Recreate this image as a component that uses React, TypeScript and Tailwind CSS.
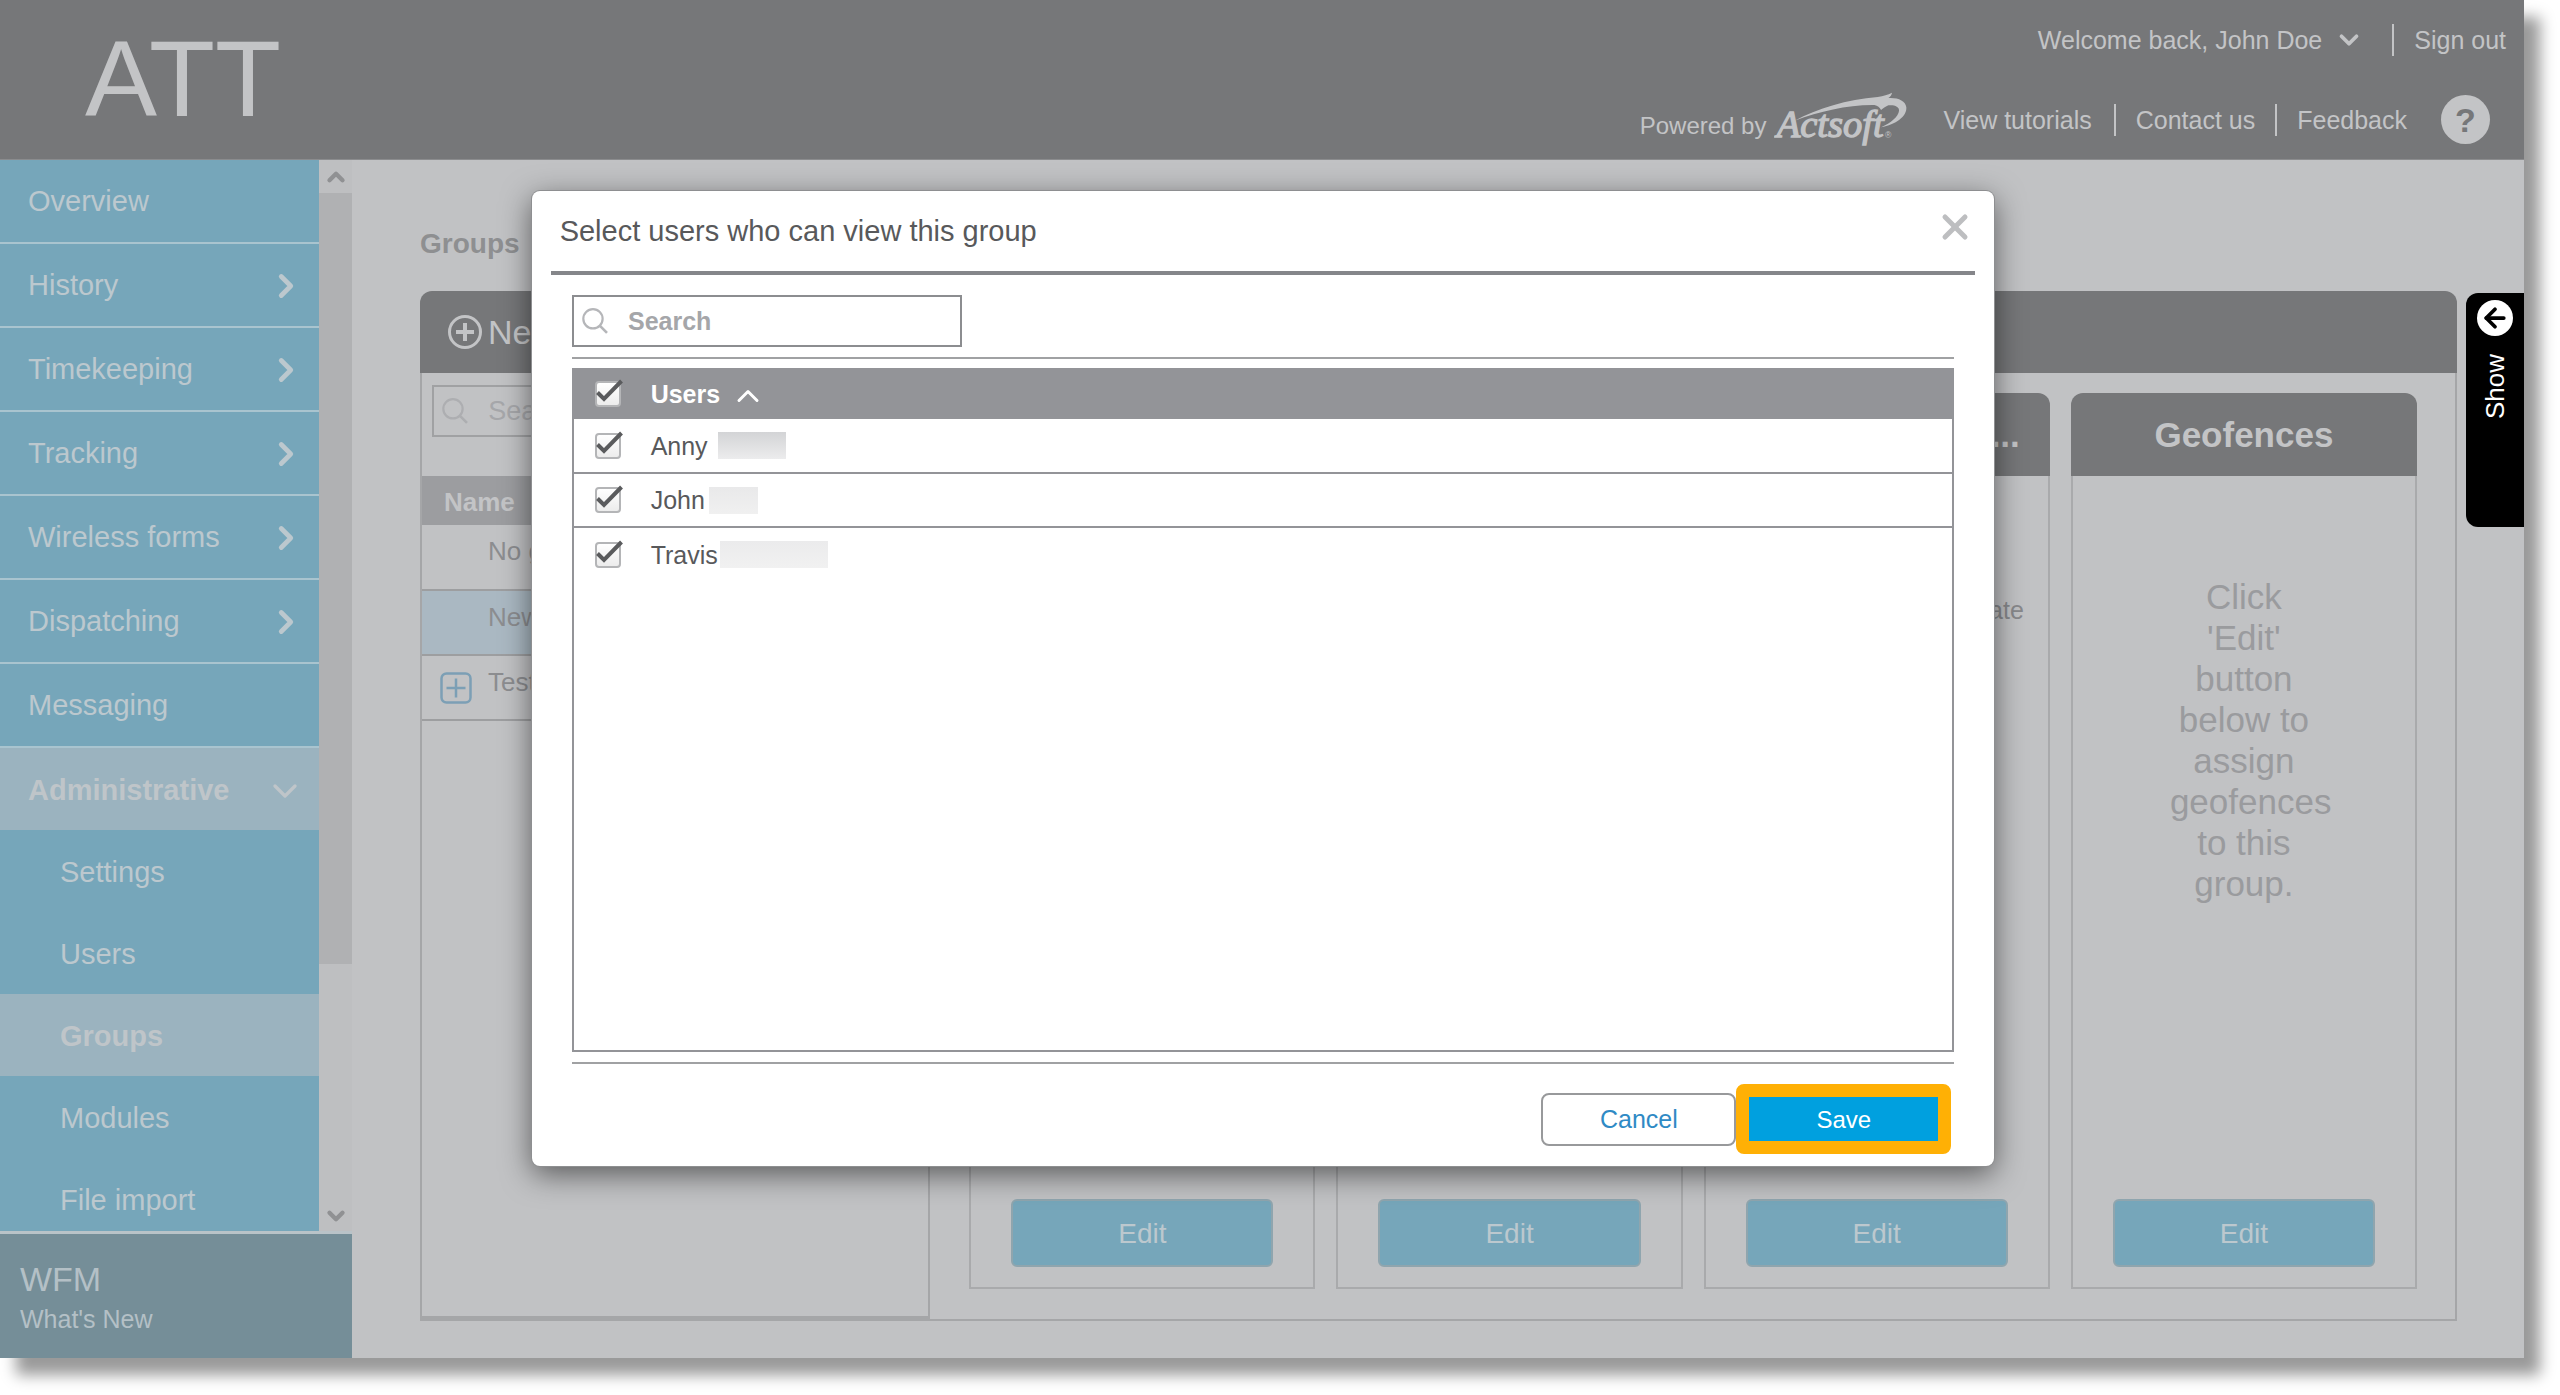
import React from 'react';
import { ArrowLeft, ChevronDown, ChevronRight, ChevronUp, X } from 'lucide-react';

const navItems = [
  { label: 'Overview', expandable: false },
  { label: 'History', expandable: true },
  { label: 'Timekeeping', expandable: true },
  { label: 'Tracking', expandable: true },
  { label: 'Wireless forms', expandable: true },
  { label: 'Dispatching', expandable: true },
  { label: 'Messaging', expandable: false },
];

const adminItems = ['Settings', 'Users', 'Groups', 'Modules', 'File import'];

const groups = [
  { name: 'No group', selected: false, expandable: false },
  { name: 'New Group', selected: true, expandable: false },
  { name: 'Test Group', selected: false, expandable: true },
];

const users = [
  { name: 'Anny', mask: 'ml-[10px] w-[68px] from-[#d3d4d6] to-[#ececed]' },
  { name: 'John', mask: 'ml-1 w-[49px] from-[#e9e9ea] to-[#f0f0f0]' },
  { name: 'Travis', mask: 'ml-[2px] w-[108px] from-[#ebebec] to-[#f1f1f1]' },
];

function SearchIcon({ className }: { className: string }) {
  return (
    <svg viewBox="0 0 30 30" className={className} fill="none" stroke="currentColor">
      <circle cx="12.5" cy="12.5" r="11" strokeWidth="2.5" />
      <path d="M20.5 20.5 28.5 28.5" strokeWidth="3" />
    </svg>
  );
}

function ActsoftLogo() {
  return (
    <svg viewBox="0 0 400 165" className="h-[55px] w-[133px]" fill="#c3c4c6" role="img" aria-label="Actsoft">
      <text
        x="8"
        y="136"
        fontSize="116"
        fontStyle="italic"
        fontFamily="Liberation Serif, serif"
        stroke="#c3c4c6"
        strokeWidth="4"
      >
        Actsoft
      </text>
      <text x="334" y="139" fontSize="26" fontFamily="Liberation Sans, sans-serif">®</text>
      <path d="M62 86C130 50 220 22 312 15C330 12 342 8 355 2C354 8 350 14 344 18C372 16 396 26 398 46C400 74 366 98 322 106C352 92 374 74 376 56C377 44 362 38 344 40C336 44 330 48 322 54C318 46 312 42 302 39C220 38 140 58 62 86Z" />
    </svg>
  );
}

function Header() {
  return (
    <header className="flex h-40 shrink-0 justify-between border-b border-[#8b8c8e] bg-[#767779] text-[#c3c4c6]">
      <div className="pt-[19px] pl-[85px] text-[108px] leading-[120px]">ATT</div>
      <div className="flex flex-col items-end pt-6 text-[25px] leading-8">
        <div className="flex h-8 items-center pr-[18px]">
          <button type="button" className="flex items-center gap-3">
            Welcome back, John Doe
            <ChevronDown size={30} strokeWidth={3} />
          </button>
          <a href="#signout" className="ml-7 border-l-2 border-[#c3c4c6] pl-5">
            Sign out
          </a>
        </div>
        <div className="mt-9 flex items-center pr-[34px]">
          <div className="flex items-center gap-2 text-2xl">
            <span className="pt-3">Powered by</span>
            <ActsoftLogo />
          </div>
          <a href="#tutorials" className="ml-9 pr-[22px]">View tutorials</a>
          <a href="#contact" className="border-l-2 border-[#c3c4c6] px-5">Contact us</a>
          <a href="#feedback" className="border-l-2 border-[#c3c4c6] pr-[34px] pl-5">Feedback</a>
          <button
            type="button"
            aria-label="Help"
            className="flex size-[49px] items-center justify-center rounded-full bg-[#c3c4c6] text-[34px] font-bold text-[#767779]"
          >
            ?
          </button>
        </div>
      </div>
    </header>
  );
}

function Sidebar() {
  return (
    <aside className="flex w-[352px] shrink-0 flex-col">
      <div className="flex min-h-0 flex-1">
        <nav className="flex-1 overflow-hidden bg-[#76a6ba] text-[#bcc8ce]">
          {navItems.map((item) => (
            <a
              key={item.label}
              href="#nav"
              className="flex h-[84px] items-center justify-between border-b-2 border-[#a9c4cf] pt-[2px] pr-[14px] pl-7 text-[29px]"
            >
              {item.label}
              {item.expandable && <ChevronRight size={38} strokeWidth={3} />}
            </a>
          ))}
          <a
            href="#nav"
            className="flex h-[82px] items-center justify-between bg-[#9bb3bf] pt-1 pr-[14px] pl-7 text-[29px] font-bold text-[#bfc5c9]"
          >
            Administrative
            <ChevronDown size={40} />
          </a>
          {adminItems.map((label) => (
            <a
              key={label}
              href="#nav"
              className={
                label === 'Groups'
                  ? 'flex h-[82px] items-center bg-[#9bb3bf] pt-1 pl-[60px] text-[29px] font-bold text-[#bfc5c9]'
                  : 'flex h-[82px] items-center pt-1 pl-[60px] text-[29px]'
              }
            >
              {label}
            </a>
          ))}
        </nav>
        <div className="flex w-[33px] flex-col items-center bg-[#bebfc1] text-[#909193]">
          <div className="flex h-[33px] items-center">
            <ChevronUp size={26} strokeWidth={4} />
          </div>
          <div className="h-[72%] w-full bg-[#b0b1b3]" />
          <ChevronDown size={26} strokeWidth={4} className="mt-auto mb-[2px]" />
        </div>
      </div>
      <div className="h-[127px] border-t-[3px] border-[#b9c3c8] bg-[#758e98] pt-[25px] pl-5 text-[#b4c0c6]">
        <div className="text-[34px] leading-10">WFM</div>
        <a href="#new" className="block text-[25px] leading-10">What&apos;s New</a>
      </div>
    </aside>
  );
}

function GroupList() {
  return (
    <div className="w-1/4 border-r-2 border-b-3 border-[#a5a6a8]">
      <div className="mx-[10px] mt-3 flex h-[52px] w-[390px] items-center border-2 border-[#a0a1a3] pl-2">
        <SearchIcon className="size-[30px] text-[#adaeb1]" />
        <input
          type="text"
          placeholder="Search"
          aria-label="Search groups"
          className="ml-5 w-full bg-transparent text-[27px] outline-none placeholder:text-[#a6a7aa]"
        />
      </div>
      <table className="mt-[39px] w-full text-left">
        <thead>
          <tr className="h-[49px] bg-[#9c9da0] text-[26px] leading-8 text-[#c3c4c6]">
            <th className="pt-[2px] pl-[22px]">Name</th>
          </tr>
        </thead>
        <tbody>
          {groups.map((group) => (
            <tr
              key={group.name}
              className={
                group.selected
                  ? 'h-[65px] border-b-2 border-[#9d9ea0] bg-[#aab8c2]'
                  : 'h-[65px] border-b-2 border-[#9d9ea0]'
              }
            >
              <td className="pl-[18px]">
                <div className="flex items-center text-[26px] leading-8 text-[#8c8d90]">
                  <span className="w-12">
                    {group.expandable && (
                      <svg viewBox="0 0 32 32" className="size-8" fill="none" stroke="#7c9fb5" strokeWidth="2.5">
                        <rect x="1.5" y="1.5" width="29" height="29" rx="5" />
                        <path d="M16 6.500V25.500M6.500 16H25.500" />
                      </svg>
                    )}
                  </span>
                  <span className="pb-3">{group.name}</span>
                </div>
              </td>
            </tr>
          ))}
        </tbody>
      </table>
    </div>
  );
}

function Card({ title, titleClass, children }: { title: string; titleClass: string; children?: React.ReactNode }) {
  return (
    <section className="flex min-w-0 flex-1 flex-col">
      <h2 className={`h-[83px] rounded-t-xl bg-[#767779] px-[30px] text-[35px] leading-[84px] font-bold text-[#c3c4c6] ${titleClass}`}>
        {title}
      </h2>
      <div className="flex flex-1 flex-col border-2 border-t-0 border-[#a9aaac] px-10 pb-5">
        {children}
        <button
          type="button"
          className="mt-auto h-[68px] rounded-md border-2 border-[#8fa5ae] bg-[#76a6ba] pt-[2px] text-[28px] text-[#bcc8ce]"
        >
          Edit
        </button>
      </div>
    </section>
  );
}

function GroupsPage() {
  return (
    <main className="flex min-w-0 flex-1 flex-col bg-[#c1c2c4] pt-16 pr-[67px] pb-[37px] pl-[68px]">
      <h1 className="text-[28px] leading-10 font-bold text-[#8e8f91]">Groups</h1>
      <div className="mt-[27px] flex h-[82px] shrink-0 items-center rounded-t-xl bg-[#767779] pl-7">
        <button type="button" className="flex items-center gap-[6px] text-[34px] text-[#c3c4c6]">
          <svg viewBox="0 0 34 34" className="size-[34px]" fill="none" stroke="currentColor">
            <circle cx="17" cy="17" r="15.500" strokeWidth="3" />
            <path d="M17 8V26M8 17H26" strokeWidth="4" />
          </svg>
          New Group
        </button>
      </div>
      <div className="flex flex-1 border-2 border-t-0 border-[#a5a6a8]">
        <GroupList />
        <div className="flex flex-1 gap-[21px] pt-5 pr-[38px] pb-[30px] pl-[39px]">
          <Card title="Users" titleClass="text-center" />
          <Card title="Managers" titleClass="text-center" />
          <Card title="Visible t..." titleClass="text-right">
            <p className="-mr-4 pt-[116px] text-right text-[25px] text-[#88898c]">Create</p>
          </Card>
          <Card title="Geofences" titleClass="text-center">
            <p className="mx-auto w-[148px] pt-[100px] text-center text-[35px] leading-[41px] text-[#9a9b9e]">
              Click &apos;Edit&apos; button below to assign geofences to this group.
            </p>
          </Card>
        </div>
      </div>
    </main>
  );
}

function Checkbox({ label }: { label: string }) {
  return (
    <span className="relative block size-[26px]">
      <input
        type="checkbox"
        defaultChecked
        aria-label={label}
        className="peer block size-[26px] appearance-none rounded-sm border-2 border-[#b4b5b7] bg-linear-to-b from-white to-[#ececec]"
      />
      <svg
        viewBox="0 0 30 30"
        className="pointer-events-none absolute -top-[2px] left-0 hidden size-[30px] peer-checked:block"
        fill="none"
        stroke="#5a5b5d"
      >
        <path d="M2.500 13.500 9 20 26.500 2" strokeWidth="4" />
      </svg>
    </span>
  );
}

function UsersDialog() {
  return (
    <div
      role="dialog"
      aria-labelledby="dialog-title"
      className="w-[58%] self-start rounded-lg bg-white text-[#58595b] shadow-[0_8px_30px_rgba(0,0,0,0.55)] ring-1 ring-[#8e8f91]"
    >
      <div className="mx-[19px] flex h-[84px] items-center justify-between border-b-4 border-[#85868a] pl-[9px]">
        <h2 id="dialog-title" className="pt-[2px] text-[29px]">Select users who can view this group</h2>
        <button type="button" aria-label="Close" className="pb-2 text-[#bdbec0]">
          <X size={40} strokeWidth={3} />
        </button>
      </div>
      <div className="px-10 pt-5">
        <div className="flex h-[52px] w-[390px] items-center border-2 border-[#8c8d90] pl-2">
          <SearchIcon className="size-[30px] text-[#b5b6b9]" />
          <input
            type="text"
            placeholder="Search"
            aria-label="Search users"
            className="ml-5 w-full bg-transparent pt-[2px] text-[25px] font-bold outline-none placeholder:text-[#a5a6a9]"
          />
        </div>
        <hr className="mt-[10px] border-t-2 border-[#a0a1a3]" />
        <div className="mt-[9px] min-h-[684px] border-2 border-t-0 border-[#939498]">
          <table className="w-full text-left text-[25px] leading-8">
            <thead>
              <tr className="h-[51px] bg-[#939498] text-white">
                <th className="w-[77px] pl-[21px]">
                  <Checkbox label="Select all users" />
                </th>
                <th>
                  <button type="button" className="flex items-center gap-[10px]">
                    Users
                    <ChevronUp size={36} className="mt-1" />
                  </button>
                </th>
              </tr>
            </thead>
            <tbody>
              {users.map((user) => (
                <tr key={user.name} className="h-[54px] border-b-2 border-[#939498] last:border-b-0">
                  <td className="pl-[21px]">
                    <Checkbox label={user.name} />
                  </td>
                  <td>
                    <span className="flex items-center">
                      {user.name}
                      <span className={`h-[27px] bg-linear-to-b ${user.mask}`} />
                    </span>
                  </td>
                </tr>
              ))}
            </tbody>
          </table>
        </div>
        <hr className="mt-[10px] border-t-2 border-[#a0a1a3]" />
      </div>
      <div className="flex items-center justify-end pt-5 pr-[43px] pb-3">
        <button type="button" className="h-[53px] w-[195px] rounded-lg border-2 border-[#98999b] pt-[2px] text-[25px] text-[#2f8ac5]">
          Cancel
        </button>
        <button type="button" className="h-[70px] w-[215px] rounded-lg border-[13px] border-[#ffb005] bg-[#00a0df] pt-[2px] text-2xl text-white">
          Save
        </button>
      </div>
    </div>
  );
}

export default function App() {
  return (
    <div className="h-screen overflow-hidden bg-white pr-9 pb-[37px] font-['Liberation_Sans',Arial,sans-serif]">
      <div className="relative flex h-full flex-col shadow-[16px_17px_14px_rgba(0,0,0,0.4)]">
        <Header />
        <div className="flex min-h-0 flex-1">
          <Sidebar />
          <GroupsPage />
        </div>

        <div className="absolute inset-0 flex justify-center pt-[191px] pl-[2px]">
          <UsersDialog />
        </div>

        <button
          type="button"
          className="absolute top-[293px] right-0 flex h-[234px] w-[58px] flex-col items-center gap-[18px] rounded-l-xl bg-black pt-[7px] text-[26px] text-white"
        >
          <span className="flex size-9 items-center justify-center rounded-full bg-white text-black">
            <ArrowLeft size={30} strokeWidth={3} />
          </span>
          <span className="rotate-180 leading-8 [writing-mode:vertical-rl]">Show</span>
        </button>
      </div>
    </div>
  );
}
